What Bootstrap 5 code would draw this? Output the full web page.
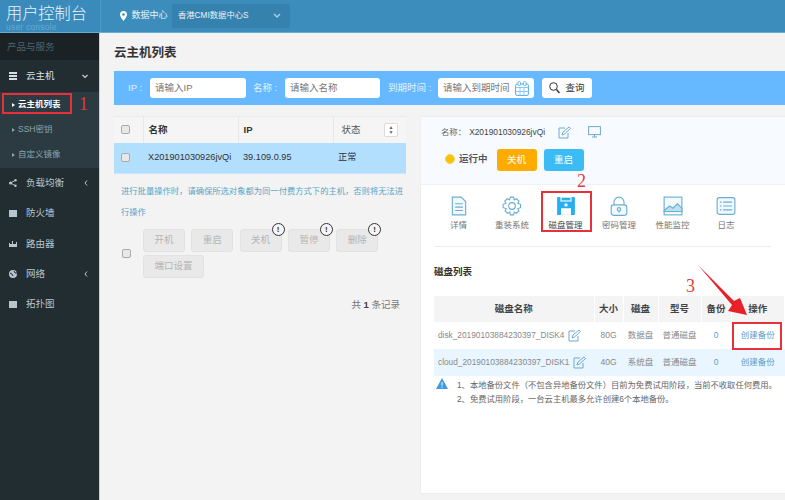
<!DOCTYPE html>
<html lang="zh"><head><meta charset="utf-8"><title>云主机列表</title>
<link href="https://cdn.jsdelivr.net/npm/bootstrap@5.3.0/dist/css/bootstrap.min.css" rel="stylesheet">
<style>
html,body{height:500px;overflow:hidden}
body{font-family:"Liberation Sans","Noto Sans CJK SC",sans-serif;font-size:10px;color:#444;background:#f3f3f3;position:relative;width:785px}
.topbar{height:33px;background:#3c8dbc;border-bottom:1px solid #67add2;color:#e6f2f8;flex:none}
.logo{width:101px;padding:4px 0 0 6px;background:#3a8bbb;position:relative;border-right:1px solid #4c98c4;flex:none}
.logo b{font-weight:300;font-size:16.200px;line-height:18px;color:#e9f3f9;display:block}
.logo i{display:block;font-style:normal;font-size:8.500px;line-height:10px;color:#6aa9cd;letter-spacing:.2px}
.dc{padding-left:19px;gap:4.500px;font-size:9px}
.dcsel{width:118px;height:24px;background:#3582ae;border-radius:2px;padding:0 9px 0 6px;font-size:8.300px;margin-top:-1px}
.shell{height:467px}
.side{width:100px;background:#222d32;border-right:1px solid #d0d0d0;color:#b8c7ce;flex:none;box-sizing:border-box;font-size:9.500px}
.sechead{height:27px;background:#1a2226;color:#4b646f;padding-left:7px;line-height:27px}
.mi{height:30.300px;padding:0 11px 0 9px;gap:9px}
.mi .lab{flex:1}
.mi svg{flex:none}
.mi.first{height:32px;color:#d8e2e6}
.sub{background:#2c3b41;height:76px;font-size:8.500px}
.si{height:25px;padding-left:12px;gap:3px;color:#8aa4af}
.si.act{color:#fff;font-weight:700}
.tri{width:0;height:0;border-left:3px solid currentColor;border-top:2.500px solid transparent;border-bottom:2.500px solid transparent}
.content{flex:1;padding:10px 0 0 14px;min-width:0}
.ttl{font-size:12.500px;font-weight:700;color:#333;line-height:20px;margin-bottom:8px;height:20px}
.sbar{height:34px;background:#66b8ff;margin-bottom:11px;padding-left:14px;color:#e2f2ff;font-size:9.500px;white-space:nowrap}
.ipt{height:20px;background:#fff;border-radius:3px;color:#777;padding:0 5px;font-size:9.500px;line-height:20px}
.lb1{width:22px}.lb2{width:32px;margin-left:7px}.lb3{width:50px;margin-left:8px}
.w96{width:96px}.w95{width:95px}
.qbtn{width:50px;height:20px;background:#fff;border-radius:3px;margin-left:8px;color:#333;gap:5px;font-size:9.500px}
.cols{gap:14px}
.lft{width:292px;flex:none}
.tb{width:100%;border-collapse:collapse;table-layout:fixed;color:#333}
.tb th{height:26px;background:#f5f5f5;border-right:1px solid #e8e8e8;border-top:1px solid #ebebeb;font-size:9.500px;padding:0 0 0 5px}
.tb th:last-child{border-right:0;font-weight:400;color:#555;padding-left:8px}
.tb td{height:31px;background:#b3dfff;padding:0 0 0 5px;font-size:9.200px;border-bottom:1px solid #c9e8ff;white-space:nowrap}
.ck{width:9px;height:9px;background:#e8e8e8;border:1px solid #aaa;border-radius:2px;display:block;margin-left:2px}
.sortb{width:14px;height:14px;background:#fff;border:1px solid #ddd;border-radius:2px;font-size:5px;line-height:5px;color:#666;padding-top:1px}
.note{color:#5aa5c5;line-height:21px;font-size:8.300px;padding:7px 1px 0 7px;height:56px;margin-bottom:0}
.ops{padding-left:6px;gap:12px;margin-top:-1px}
.oplist{gap:3px 6.300px;width:240px}
.gb{height:23px;width:42px;background:#e9e9e9;border:1px solid #e2e2e2;border-radius:3px;color:#b5b5b5;font-size:9.500px;position:relative;padding:0}
.gb.wide{width:61px}
.gb em{position:absolute;right:-4px;top:-7px;width:13px;height:13px;border:1px solid #333;border-radius:50%;background:#f5f5f5;color:#333;font-style:normal;font-weight:700;font-size:8px;line-height:11px;text-align:center}
.tot{text-align:right;color:#777;padding:20px 6px 0 0;font-size:9.500px}
.tot b{color:#444}
.rgt{flex:1;height:378px;background:#fff;border:1px solid #eee;border-right:0;min-width:0}
.rhead{height:68px;background:#f7fbff;border-bottom:1px solid #eef2f5;padding:7px 0 0 20px}
.nm{gap:3px;font-size:8.400px;line-height:14px;height:16px;color:#666}
.nm span+span{color:#444}
.nm svg{flex:none}
.ped{margin-left:10px}
.mon{margin-left:14px}
.st{margin-top:7px;gap:4px}
.dot{width:10px;height:10px;border-radius:50%;background:#f6c400;border:1px solid #f0d060;margin-left:4px}
.st b{font-size:9.500px;color:#555;margin-right:5px}
.bo,.bb{width:40px;height:22px;border-radius:3px;color:#fff;font-size:9.500px;line-height:22px;text-align:center;margin-right:3px;margin-top:2px}
.bo{background:#ffab00}.bb{background:#3cbcf5}
.tabs{padding:8px 0 0 7px;margin:0 14px 0 13px;height:62px;border-bottom:1px solid #eee}
.tabi{width:50px;margin-right:3.500px;color:#777;font-size:8.500px;padding-top:3px;line-height:12px}
.tabi:first-child{width:35px;margin-right:11px}
.tabi svg{height:20px;width:20px;margin-bottom:3px}
.tabi.on{color:#444}
.dl{padding:18px 0 0 13px}
.dl h6{font-size:9.500px;font-weight:700;color:#333;line-height:14px;margin:0 0 17px;height:14px}
.dt{width:351px;border-collapse:collapse;table-layout:fixed;text-align:center;color:#888;font-size:8.500px}
.dt th{height:26px;background:#f4f4f4;color:#444;font-size:9.500px;border-right:1px solid #fff}
.dt td{height:27px;white-space:nowrap;padding:0}
.dt tr.alt td{background:#e9f6ff}
.dt td.nmc{text-align:left;padding-left:4px;font-size:8.300px}
.dt td.nmc svg{margin-left:1px}
.dt a{color:#5f9cc5;text-decoration:none}
.dt .zero{color:#5f9cc5}
.warn{padding-left:2px;color:#666;font-size:8.300px;line-height:14px;padding-top:2px;white-space:nowrap}
.warn svg{flex:none;margin-right:9px}
.rb{position:absolute;border:2px solid #e8303a;background:transparent}
.rn{position:absolute;font-family:"Liberation Serif",serif;color:#e23a3a;font-size:18px;line-height:20px}
.arrow{position:absolute;left:690px;top:262px}
.c1{width:29px}.c2{width:95px}
.d1{width:160px}.d2{width:29px}.d3{width:35px}.d4{width:43px}.d5{width:30px}
.a1{left:2px;top:93px;width:70px;height:21px}.n1{left:79px;top:94px}
.a2{left:541px;top:191px;width:51px;height:41px}.n2{left:577px;top:171px}
.n3{left:686px;top:276px}
.a3{left:732px;top:322px;width:50px;height:28px}
</style></head>
<body>
<header class="topbar d-flex">
  <div class="logo"><b>用户控制台</b><i>user console</i></div>
  <div class="dc d-flex align-items-center">
    <svg width="7" height="10" viewBox="0 0 7 10"><path d="M3.500 0a3.500 3.500 0 0 0-3.500 3.500C0 6 3.500 10 3.500 10S7 6 7 3.500A3.500 3.500 0 0 0 3.500 0z" fill="#fff"/><circle cx="3.500" cy="3.500" r="1.300" fill="#3c8dbc"/></svg>
    <span>数据中心</span>
    <div class="dcsel d-flex align-items-center justify-content-between"><span>香港CMI数据中心S</span>
      <svg width="8" height="6" viewBox="0 0 8 6"><path d="M1 1l3 3 3-3" fill="none" stroke="#a9cde2" stroke-width="1.500"/></svg></div>
  </div>
</header>
<div class="shell d-flex">
  <aside class="side">
    <div class="sechead">产品与服务</div>
    <div class="mi first d-flex align-items-center"><svg width="8" height="8"><rect width="8" height="8" fill="#d5dfe3"/><path d="M0 2.500h8M0 5.500h8" stroke="#222d32"/></svg><span class="lab">云主机</span><svg width="6" height="5" viewBox="0 0 6 5"><path d="M.5 1l2.500 2.500L5.500 1" fill="none" stroke="#ccd" stroke-width="1.200"/></svg></div>
    <div class="sub">
      <div class="si act d-flex align-items-center"><span class="tri"></span>云主机列表</div>
      <div class="si d-flex align-items-center"><span class="tri"></span>SSH密钥</div>
      <div class="si d-flex align-items-center"><span class="tri"></span>自定义镜像</div>
    </div>
    <div class="mi d-flex align-items-center"><svg width="8" height="8" viewBox="0 0 8 8"><circle cx="1.500" cy="4" r="1.500" fill="#b8c7ce"/><circle cx="6.500" cy="1.200" r="1.200" fill="#b8c7ce"/><circle cx="6.500" cy="6.800" r="1.200" fill="#b8c7ce"/><path d="M1.500 4L6.500 1.200M1.500 4L6.500 6.800" stroke="#b8c7ce"/></svg><span class="lab">负载均衡</span><svg width="4" height="6" viewBox="0 0 4 6"><path d="M3 .5L1 3l2 2.500" fill="none" stroke="#b8c7ce"/></svg></div>
    <div class="mi d-flex align-items-center"><svg width="8" height="7"><rect width="8" height="7" fill="#b8c7ce"/></svg><span class="lab">防火墙</span></div>
    <div class="mi d-flex align-items-center"><svg width="8" height="7" viewBox="0 0 8 7"><path d="M0 3h1v1h6V2h1v5H0zM3 1h1v3H3z" fill="#b8c7ce"/></svg><span class="lab">路由器</span></div>
    <div class="mi d-flex align-items-center"><svg width="8" height="8" viewBox="0 0 8 8"><circle cx="4" cy="4" r="4" fill="#b8c7ce"/><path d="M1 3l2 1 1 2M5 1l1 2 2 0" stroke="#222d32" fill="none"/></svg><span class="lab">网络</span><svg width="4" height="6" viewBox="0 0 4 6"><path d="M3 .5L1 3l2 2.500" fill="none" stroke="#b8c7ce"/></svg></div>
    <div class="mi d-flex align-items-center"><svg width="8" height="7"><rect width="8" height="7" fill="#b8c7ce"/></svg><span class="lab">拓扑图</span></div>
  </aside>
  <main class="content">
    <div class="ttl">云主机列表</div>
    <div class="sbar d-flex align-items-center">
      <span class="lb1">IP :</span><div class="ipt w96">请输入IP</div>
      <span class="lb2">名称 :</span><div class="ipt w95">请输入名称</div>
      <span class="lb3">到期时间 :</span>
      <div class="ipt w96 d-flex align-items-center justify-content-between"><span>请输入到期时间</span>
        <svg class="flex-shrink-0" width="14" height="15" viewBox="0 0 14 15"><rect x=".6" y="3" width="12.800" height="11.400" rx="1.500" fill="none" stroke="#4aa8f0"/><path d="M.6 6.500h12.800M5 6.500v8M9 6.500v8M.6 10.500h12.800" stroke="#8cc8f5" fill="none"/><rect x="3" y=".6" width="2.500" height="4" rx="1" fill="#fff" stroke="#4aa8f0" stroke-width=".8"/><rect x="8.500" y=".6" width="2.500" height="4" rx="1" fill="#fff" stroke="#4aa8f0" stroke-width=".8"/></svg></div>
      <div class="qbtn d-flex align-items-center justify-content-center"><svg width="11" height="12" viewBox="0 0 11 12"><circle cx="4.500" cy="4.500" r="3.800" fill="none" stroke="#333"/><path d="M7.500 7.500l3 3.500" stroke="#333" stroke-width="1.500"/></svg><span>查询</span></div>
    </div>
    <div class="cols d-flex">
      <section class="lft">
        <table class="tb">
          <colgroup><col class="c1"><col class="c2"><col class="c2"><col></colgroup>
          <tr><th><span class="ck"></span></th><th>名称</th><th>IP</th><th><div class="d-flex align-items-center justify-content-between pe-2"><span>状态</span><span class="sortb d-block text-center">▲<br>▼</span></div></th></tr>
          <tr><td><span class="ck"></span></td><td>X201901030926jvQi</td><td>39.109.0.95</td><td>正常</td></tr>
        </table>
        <p class="note">进行批量操作时，请确保所选对象都为同一付费方式下的主机，否则将无法进行操作</p>
        <div class="ops d-flex align-items-center">
          <span class="ck"></span>
          <div class="oplist d-flex flex-wrap">
            <button class="gb" type="button">开机</button><button class="gb" type="button">重启</button>
            <button class="gb" type="button">关机<em>!</em></button><button class="gb" type="button">暂停<em>!</em></button><button class="gb" type="button">删除<em>!</em></button>
            <button class="gb wide" type="button">端口设置</button>
          </div>
        </div>
        <div class="tot">共 <b>1</b> 条记录</div>
      </section>
      <section class="rgt">
        <div class="rhead">
          <div class="nm d-flex align-items-center"><span>名称：</span><span>X201901030926jvQi</span>
            <svg class="ped" width="13" height="13" viewBox="0 0 13 13"><path d="M10 7v5H1V2h6" fill="none" stroke="#6fa9cf"/><path d="M4 9l1-3 6-5 1.500 1.500-6 5.500z" fill="none" stroke="#6fa9cf"/></svg>
            <svg class="mon" width="13" height="12" viewBox="0 0 13 12"><rect x=".6" y=".6" width="11.800" height="8" fill="none" stroke="#6fa9cf"/><path d="M4 11h5M6.500 9v2" stroke="#6fa9cf"/></svg></div>
          <div class="st d-flex align-items-center"><span class="dot"></span><b>运行中</b><span class="bo">关机</span><span class="bb">重启</span></div>
        </div>
        <div class="tabs d-flex">
          <div class="tabi d-flex flex-column align-items-center"><svg viewBox="0 0 18 18"><path d="M3 1h8l4 4v12H3z M5.500 7h7M5.500 10h7M5.500 13h7" fill="#f2f9fd" stroke="#69aed2"/></svg><span>详情</span></div>
          <div class="tabi d-flex flex-column align-items-center"><svg viewBox="0 0 18 18"><path d="M7.500 1h3l.5 2.500 2-1 2.200 2.200-1 2 2.500.8v3l-2.500.8 1 2-2.200 2.200-2-1-.5 2.500h-3l-.5-2.500-2 1-2.200-2.200 1-2L1 10.500v-3l2.500-.8-1-2L4.700 2.500l2 1z" fill="none" stroke="#69aed2"/><circle cx="9" cy="9" r="3" fill="none" stroke="#69aed2"/></svg><span>重装系统</span></div>
          <div class="tabi on d-flex flex-column align-items-center"><svg viewBox="0 0 18 18"><path d="M1 2a1 1 0 0 1 1-1h14a1 1 0 0 1 1 1v15H1z" fill="#27aef0"/><rect x="4.500" y="1" width="9" height="3.500" fill="#27aef0" stroke="#fff"/><rect x="4.500" y="11" width="9" height="6" fill="#fff"/><circle cx="9" cy="8" r="1.500" fill="#fff"/></svg><span>磁盘管理</span></div>
          <div class="tabi d-flex flex-column align-items-center"><svg viewBox="0 0 18 18"><path d="M4.500 8V5.500a4.500 4.500 0 0 1 9 0V8" fill="none" stroke="#69aed2"/><rect x="2" y="8" width="14" height="9.400" rx="2" fill="#f2f9fd" stroke="#69aed2"/><circle cx="9" cy="12" r="1.500" fill="none" stroke="#69aed2"/><path d="M9 13.500V15" stroke="#69aed2"/></svg><span>密码管理</span></div>
          <div class="tabi d-flex flex-column align-items-center"><svg viewBox="0 0 18 18"><rect x="1" y="1" width="16" height="16" fill="#f2f9fd" stroke="#69aed2"/><path d="M1 13l5-4 3 2 4-4 4 4v3H1z" fill="#bfdff0" stroke="#69aed2"/></svg><span>性能监控</span></div>
          <div class="tabi d-flex flex-column align-items-center"><svg viewBox="0 0 18 18"><rect x="1" y="1.500" width="16" height="15" rx="2" fill="#f2f9fd" stroke="#69aed2"/><path d="M3.500 5.500h1.500M6.500 5.500h8M3.500 9h1.500M6.500 9h8M3.500 12.500h1.500M6.500 12.500h8" stroke="#69aed2"/></svg><span>日志</span></div>
        </div>
        <div class="dl">
          <h6>磁盘列表</h6>
          <table class="dt">
            <colgroup><col class="d1"><col class="d2"><col class="d3"><col class="d4"><col class="d5"><col></colgroup>
            <tr><th>磁盘名称</th><th>大小</th><th>磁盘</th><th>型号</th><th>备份</th><th>操作</th></tr>
            <tr><td class="nmc">disk_20190103884230397_DISK4 <svg width="13" height="13" viewBox="0 0 13 13" class="align-middle"><path d="M10 7v5H1V2h6" fill="none" stroke="#6fa9cf"/><path d="M4 9l1-3 6-5 1.500 1.500-6 5.500z" fill="none" stroke="#6fa9cf"/></svg></td><td>80G</td><td>数据盘</td><td>普通磁盘</td><td class="zero">0</td><td><a href="#">创建备份</a></td></tr>
            <tr class="alt"><td class="nmc">cloud_20190103884230397_DISK1 <svg width="13" height="13" viewBox="0 0 13 13" class="align-middle"><path d="M10 7v5H1V2h6" fill="none" stroke="#6fa9cf"/><path d="M4 9l1-3 6-5 1.500 1.500-6 5.500z" fill="none" stroke="#6fa9cf"/></svg></td><td>40G</td><td>系统盘</td><td>普通磁盘</td><td class="zero">0</td><td><a href="#">创建备份</a></td></tr>
          </table>
          <div class="warn d-flex"><svg width="12" height="11" viewBox="0 0 12 11"><path d="M6 0l6 11H0z" fill="#3f9ae0"/><path d="M6 4v3.500M6 8.500v1.200" stroke="#fff"/></svg>
            <div>1、本地备份文件（不包含异地备份文件）目前为免费试用阶段，当前不收取任何费用。<br>2、免费试用阶段，一台云主机最多允许创建6个本地备份。</div></div>
        </div>
      </section>
    </div>
  </main>
</div>
<div class="rb a1"></div>
<div class="rn n1">1</div>
<div class="rb a2"></div>
<div class="rn n2">2</div>
<div class="rn n3">3</div>
<div class="rb a3"></div>
<svg class="arrow" width="60" height="70" viewBox="0 0 60 70"><path d="M8 3L44 39 50 36 57 53 38 49 42 43z" fill="#e8202a"/></svg>
</body></html>
